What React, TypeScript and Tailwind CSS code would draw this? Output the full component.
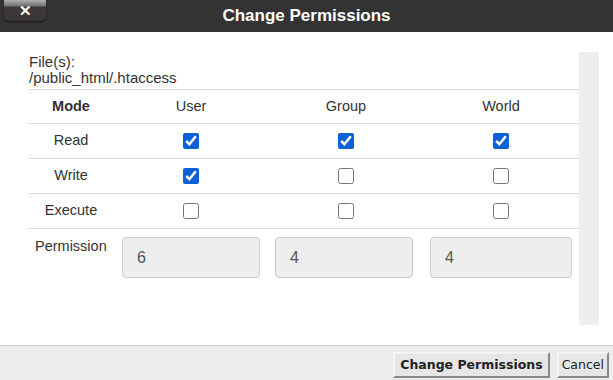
import { useState } from 'react';

type Perm = { read: boolean; write: boolean; execute: boolean };

const groups = ['User', 'Group', 'World'] as const;

export default function App() {
  const [perms, setPerms] = useState<Record<string, Perm>>({
    User: { read: true, write: true, execute: false },
    Group: { read: true, write: false, execute: false },
    World: { read: true, write: false, execute: false },
  });

  const toggle = (g: string, k: keyof Perm) =>
    setPerms((p) => ({ ...p, [g]: { ...p[g], [k]: !p[g][k] } }));

  const octal = (p: Perm) => (p.read ? 4 : 0) + (p.write ? 2 : 0) + (p.execute ? 1 : 0);

  const rows: { key: keyof Perm; label: string }[] = [
    { key: 'read', label: 'Read' },
    { key: 'write', label: 'Write' },
    { key: 'execute', label: 'Execute' },
  ];

  return (
    <div className="w-[613px] h-[380px] flex flex-col bg-white overflow-hidden font-['Liberation_Sans',Arial,sans-serif] text-[#333]">
      {/* title bar */}
      <div className="relative h-8 shrink-0 bg-[#333] flex items-center justify-center">
        <button className="absolute left-1 top-0 w-[42px] h-[21px] rounded-b-[5px] bg-[linear-gradient(#b0b0b0_0%,#6e6e6e_30%,#3d3939_32%,#3a3636_100%)] shadow-[0_1px_2px_rgba(0,0,0,0.6)] flex items-center justify-center text-white font-bold text-[15px] leading-none">
          ✕
        </button>
        <h1 className="text-white font-bold text-[17px]">Change Permissions</h1>
      </div>

      {/* body */}
      <div className="flex-1 flex min-h-0">
        <div className="w-[550px] ml-[29px] pt-[22px]">
          <div className="text-[15px] leading-[16px] pb-[3px]">
            <div>File(s):</div>
            <div>/public_html/.htaccess</div>
          </div>

          <div className="grid grid-cols-[84px_156px_154px_156px] text-[14.5px] text-center">
            <div className="h-[35px] border-y border-[#ddd] flex items-center justify-center font-bold">Mode</div>
            {groups.map((g) => (
              <div key={g} className="h-[35px] border-y border-[#ddd] flex items-center justify-center">
                {g}
              </div>
            ))}

            {rows.map((r) => (
              <div key={r.key} className="contents">
                <div className="h-[35px] border-b border-[#ddd] flex items-center justify-center">{r.label}</div>
                {groups.map((g) => (
                  <div key={g} className="h-[35px] border-b border-[#ddd] flex items-center justify-center">
                    <input
                      type="checkbox"
                      checked={perms[g][r.key]}
                      onChange={() => toggle(g, r.key)}
                      className="w-4 h-4 m-0 accent-[#0b62d6]"
                    />
                  </div>
                ))}
              </div>
            ))}

            <div className="pt-[7px] pl-[6px] text-left">Permission</div>
            <div className="pt-[8px] pl-[9px] pr-[9px]">
              <input readOnly value={octal(perms.User)} className="w-full h-[41px] px-[14px] rounded-[4px] border border-[#ccc] bg-[#eee] text-[16px] text-[#555] outline-none" />
            </div>
            <div className="pt-[8px] pl-[6px] pr-[10px]">
              <input readOnly value={octal(perms.Group)} className="w-full h-[41px] px-[14px] rounded-[4px] border border-[#ccc] bg-[#eee] text-[16px] text-[#555] outline-none" />
            </div>
            <div className="pt-[8px] pl-[7px] pr-[7px]">
              <input readOnly value={octal(perms.World)} className="w-full h-[41px] px-[14px] rounded-[4px] border border-[#ccc] bg-[#eee] text-[16px] text-[#555] outline-none" />
            </div>
          </div>
        </div>
        <div className="w-5 my-5 bg-[#eee]" />
      </div>

      {/* footer */}
      <div className="h-[35px] shrink-0 border-t border-[#ccc] bg-[#ececec] flex items-end justify-end gap-[7px] pr-[4px] pb-[2px] font-['DejaVu_Sans',Verdana,sans-serif] text-[12.5px] text-[#222]">
        <button className="h-[26px] px-[5px] bg-[#e6e6e6] border-2 border-t-[#f4f4f4] border-l-[#f4f4f4] border-r-[#888] border-b-[#888] font-bold">
          Change Permissions
        </button>
        <button className="h-[26px] px-[3px] bg-[#e6e6e6] border-2 border-t-[#f4f4f4] border-l-[#f4f4f4] border-r-[#888] border-b-[#888]">
          Cancel
        </button>
      </div>
    </div>
  );
}
